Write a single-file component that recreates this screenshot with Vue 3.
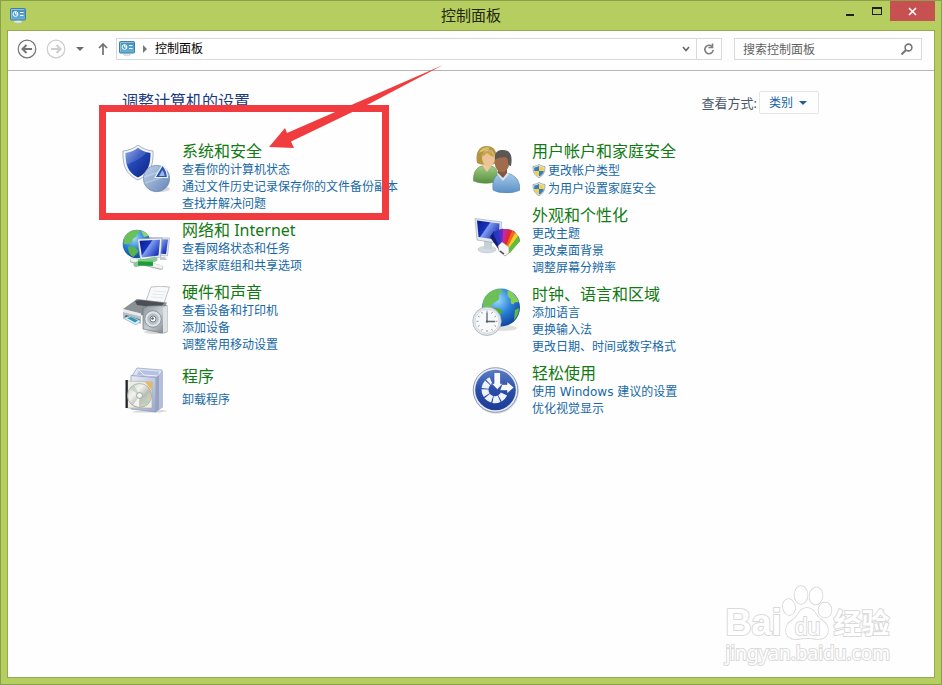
<script setup>
import { ref } from 'vue'

const search = ref('')
const viewMode = ref('category')

const columns = [
  [
    { icon: 'security', title: '系统和安全', links: ['查看你的计算机状态', '通过文件历史记录保存你的文件备份副本', '查找并解决问题'] },
    { icon: 'network', title: '网络和 Internet', links: ['查看网络状态和任务', '选择家庭组和共享选项'] },
    { icon: 'hardware', title: '硬件和声音', links: ['查看设备和打印机', '添加设备', '调整常用移动设置'] },
    { icon: 'programs', title: '程序', links: ['卸载程序'] }
  ],
  [
    { icon: 'users', title: '用户帐户和家庭安全', links: ['更改帐户类型', '为用户设置家庭安全'], shield: true },
    { icon: 'appearance', title: '外观和个性化', links: ['更改主题', '更改桌面背景', '调整屏幕分辨率'] },
    { icon: 'clock', title: '时钟、语言和区域', links: ['添加语言', '更换输入法', '更改日期、时间或数字格式'] },
    { icon: 'ease', title: '轻松使用', links: ['使用 Windows 建议的设置', '优化视觉显示'] }
  ]
]
</script>

<template>
  <div class="window">
    <svg class="sprite" width="0" height="0" aria-hidden="true">
      <defs>
        <linearGradient id="g-blue" x1="0" y1="0" x2="1" y2="1">
          <stop offset="0" stop-color="#7e9ee6" />
          <stop offset="0.4" stop-color="#2348b8" />
          <stop offset="1" stop-color="#0c2380" />
        </linearGradient>
        <linearGradient id="g-ease" x1="0" y1="0" x2="0" y2="1">
          <stop offset="0" stop-color="#5b7cc4" />
          <stop offset="0.5" stop-color="#2a4ea8" />
          <stop offset="1" stop-color="#1c3c98" />
        </linearGradient>
        <linearGradient id="g-screen" x1="0" y1="0" x2="1" y2="0.6">
          <stop offset="0" stop-color="#0a1a8c" />
          <stop offset="0.45" stop-color="#1633bb" />
          <stop offset="0.5" stop-color="#7f9df0" />
          <stop offset="1" stop-color="#1a35b8" />
        </linearGradient>
        <radialGradient id="g-globe" cx="0.4" cy="0.3" r="0.75">
          <stop offset="0" stop-color="#9fdcff" />
          <stop offset="0.5" stop-color="#2b83d8" />
          <stop offset="1" stop-color="#0b3f96" />
        </radialGradient>
        <linearGradient id="g-pie" x1="0" y1="0" x2="1" y2="1">
          <stop offset="0" stop-color="#c3d3ea" />
          <stop offset="1" stop-color="#6385b8" />
        </linearGradient>
        <linearGradient id="g-metal" x1="0" y1="0" x2="1" y2="1">
          <stop offset="0" stop-color="#8c949c" />
          <stop offset="0.5" stop-color="#c9ced3" />
          <stop offset="1" stop-color="#747c84" />
        </linearGradient>
        <linearGradient id="g-box" x1="0" y1="0" x2="1" y2="1">
          <stop offset="0" stop-color="#e9edf8" />
          <stop offset="1" stop-color="#9ba8cc" />
        </linearGradient>
        <linearGradient id="g-disc" x1="0" y1="0" x2="1" y2="1">
          <stop offset="0" stop-color="#c3ccbe" />
          <stop offset="0.35" stop-color="#f4f4ef" />
          <stop offset="0.6" stop-color="#b9bdb6" />
          <stop offset="1" stop-color="#f1e6c6" />
        </linearGradient>
        <linearGradient id="g-green" x1="0" y1="0" x2="0" y2="1">
          <stop offset="0" stop-color="#a3cc86" />
          <stop offset="1" stop-color="#568f3e" />
        </linearGradient>
        <linearGradient id="g-shirt" x1="0" y1="0" x2="0" y2="1">
          <stop offset="0" stop-color="#a9cbe9" />
          <stop offset="1" stop-color="#5a90c6" />
        </linearGradient>
        <linearGradient id="g-panel" x1="0" y1="0" x2="0" y2="1">
          <stop offset="0" stop-color="#3f8cba" />
          <stop offset="1" stop-color="#68b4d8" />
        </linearGradient>
      </defs>

      <symbol id="icon-panel" viewBox="0 0 16 16">
        <ellipse cx="8" cy="13.5" rx="4" ry="1.7" fill="#d6dce0" />
        <path d="M6.500 11h3.500v3H6.500z" fill="#e3e8eb" />
        <rect x="0.5" y="0.5" width="15" height="11.500" rx="1" fill="url(#g-panel)" stroke="#3f7fa6" />
        <path d="M1.500 10.500V1.500h13" fill="none" stroke="#8cc0dc" />
        <circle cx="5.500" cy="6" r="2.400" fill="none" stroke="#fff" />
        <path d="M5.500 6V3.600M5.500 6h2.400" stroke="#fff" />
        <path d="M10 4.500h3.500M10 7.500h3.500" stroke="#fff" stroke-width="1.200" />
      </symbol>

      <symbol id="icon-security" viewBox="0 0 48 48">
        <ellipse cx="38" cy="44" rx="10" ry="3" fill="#000" opacity="0.15" />
        <path d="M16 0C12 3.500 6.500 5.500 1 6c-.5 13 2 23 15 29 13-6 15.500-16 15-29C25.500 5.500 20 3.500 16 0z" fill="#f2f5fa" stroke="#8f9db2" stroke-width="0.8" />
        <path d="M16 2.800C12.500 5.500 8 7.500 3.500 8c0 11 2 19.500 12.500 24.500C26.500 27.500 28.500 19 28.500 8 24 7.500 19.500 5.500 16 2.800z" fill="url(#g-blue)" />
        <path d="M16 2.800C12.500 5.500 8 7.500 3.500 8c0 5 .3 8 1.500 11 5-1 12-4 22-13-4-.5-8-1.500-11-3.200z" fill="#fff" opacity="0.15" />
        <circle cx="34.500" cy="33.500" r="13.200" fill="url(#g-pie)" stroke="#6d88ae" stroke-width="0.7" />
        <path d="M22 32l24-8M23 38l24-8" stroke="#dce7f4" stroke-width="1.500" opacity="0.4" />
        <path d="M33 32.500L40.500 20q4.500 5 5 12.500z" fill="#2b52b0" stroke="#e9f1fb" stroke-width="1.200" />
        <path d="M37 31l3.500-6q2 3 2.200 6z" fill="#9cb7e4" />
      </symbol>

      <symbol id="icon-network" viewBox="0 0 48 48">
        <circle cx="15" cy="20" r="14.300" fill="url(#g-globe)" />
        <path d="M3 12c3-4 7-6.500 12-6 3 0 4 1.500 2 3-3 1-2 4-5 5-2 1-1 4-3 5-3 0-5 2-7 1-1-3 0-6 1-8z" fill="#6bc05c" />
        <path d="M6 23c4-2 9 1 10 4 0 3-3 3-4 6-4-1-6-5-6-10z" fill="#5ab24c" />
        <path d="M19 7c3 0 6 2 8 5l-5 1z" fill="#8fd070" />
        <path d="M28 13.500l19.500.5-2 18-16-1z" fill="#e1e5ec" stroke="#a3abb8" stroke-width="0.6" />
        <path d="M29 15l17 .5-2 14.500-15-.7z" fill="url(#g-screen)" />
        <path d="M15.500 15l24.500-1-1.500 19-20 3z" fill="#edf0f5" stroke="#8d96a5" stroke-width="0.6" />
        <path d="M17.500 16.800l20.500-1-1.500 15.700-16.500 2z" fill="url(#g-screen)" />
        <path d="M26 35h6l2 3-9-.5z" fill="#c5cad1" />
        <path d="M38 33h5l2 3h-7z" fill="#c5cad1" />
        <path d="M10 36.500l29 7" stroke="#a4aaac" stroke-width="4.500" stroke-linecap="round" />
        <path d="M10 36l29 7" stroke="#eef2f1" stroke-width="3.500" stroke-linecap="round" />
        <path d="M14 40.500L33 35" stroke="#8fc79c" stroke-width="5" stroke-linecap="round" />
        <path d="M16 38.500l15 .5" stroke="#1f9a3d" stroke-width="6" />
        <path d="M16 36.500l15 .5" stroke="#79dd75" stroke-width="1.500" />
      </symbol>

      <symbol id="icon-hardware" viewBox="0 0 48 48">
        <path d="M29 1q9-1.500 18.500 0L42 17l-18-2z" fill="#f8f9fb" stroke="#a7abb0" stroke-width="0.7" />
        <path d="M31 5l13 .8M30 8l12.500 .8M29 11l12 .8" stroke="#e0e3e6" stroke-width="0.8" />
        <path d="M1 23l14-10 30 3.500-5 10-22 3z" fill="#8b9095" />
        <path d="M13 15l5-1 24 3-4 5-23-3z" fill="#4a4f54" />
        <path d="M1 23l18 4.500V38L1 31z" fill="#babfc3" />
        <path d="M1 23l18 4.500v3L1 26z" fill="#e9ebed" />
        <path d="M4 29l14 4.500-1 3-15-5z" fill="#3d6576" />
        <path d="M1 32l7-2 11 5-5 4z" fill="#ddeef6" stroke="#78a3b5" stroke-width="0.6" />
        <path d="M5 32l4-1 7 3.500-3 2z" fill="#2c97bd" />
        <ellipse cx="34" cy="46" rx="12" ry="2" fill="#000" opacity="0.15" />
        <path d="M21 22l5-2 19-.5v26L40 47l-19-4z" fill="url(#g-metal)" stroke="#6b7278" stroke-width="0.7" />
        <path d="M41 22l4-2.500v26L41 47z" fill="#dfe2e4" />
        <circle cx="31" cy="33" r="8.300" fill="#dfe4e7" stroke="#8b9298" />
        <circle cx="31" cy="33" r="5.800" fill="#b9c0c5" />
        <circle cx="31" cy="33" r="3" fill="#f5f7f8" stroke="#7d858b" />
        <circle cx="30.500" cy="32.500" r="1.200" fill="#59636b" />
      </symbol>

      <symbol id="icon-programs" viewBox="0 0 48 48">
        <path d="M13 46l28-1 5 1-8 1.500H10z" fill="#000" opacity="0.15" />
        <path d="M10 11l5-8 25 2-1 9z" fill="#dfe4f3" stroke="#8e9bbd" stroke-width="0.7" />
        <path d="M17 5l20 1.500-1.500 6L15 10z" fill="#b4c0e4" />
        <path d="M17 5l5 5 14 1" fill="none" stroke="#eef2fb" />
        <path d="M9 10.500l25 2V47l-25-3z" fill="url(#g-box)" stroke="#8794b7" stroke-width="0.7" />
        <path d="M34 12.500L41 6v36l-7 5z" fill="#97a2c0" />
        <path d="M37 10l4-4v36l-4 2.500z" fill="#b5bfd8" />
        <path d="M5.500 16L30 17v26L5.500 43z" fill="#eeeee8" stroke="#aaa99f" stroke-width="0.6" />
        <path d="M23 17h7v9z" fill="#e6ba62" />
        <path d="M3.500 15h2.300v28H3.500z" fill="#22252a" />
        <circle cx="17.500" cy="30.500" r="12" fill="url(#g-disc)" stroke="#9ca099" stroke-width="0.7" />
        <path d="M17.500 30.500L8 23.500l4-4zM17.500 30.500l10 6-4 5z" fill="#b4cfba" opacity="0.7" />
        <path d="M17.500 30.500L17 42l-6-2z" fill="#fff" opacity="0.8" />
        <circle cx="17.500" cy="30.500" r="3" fill="#eef1f0" stroke="#8f9694" stroke-width="0.8" />
        <circle cx="17.500" cy="30.500" r="1.100" fill="#fff" />
      </symbol>

      <symbol id="icon-users" viewBox="0 0 48 48">
        <path d="M1.500 36C1 27 5 22 10 21h9c5 1 8 6 7 15-8 3-17 3-24.500 0z" fill="url(#g-green)" stroke="#5e8b48" stroke-width="0.6" />
        <path d="M10 20l5 7 5-7z" fill="#f1c89f" />
        <path d="M5 18C3 8 7 1 14.500 1 22 1 26 6 24.500 18c-3 2-6 2-9 1-4 1-7 1-10.500-1z" fill="#b3953f" />
        <path d="M7 8c2-5 7-7 11-5-4 2-9 4-11 5z" fill="#d8c375" />
        <ellipse cx="16.500" cy="13" rx="6.500" ry="8.500" fill="#edc297" />
        <path d="M9 12c1-5 5-6 9-7 3 2 4 5 4 7-3-1-5-2-7-4-2 2-4 3-6 4z" fill="#c4a64e" />
        <path d="M21 45c-1-10 2-15 8-17h6c8 2 13 7 13 17-8 4-20 4-27 0z" fill="url(#g-shirt)" stroke="#5082b3" stroke-width="0.6" />
        <path d="M25 29l6 7 6-7-4-4h-5z" fill="#d5e6f5" />
        <path d="M26 22h9v6l-4 5-5-5z" fill="#84573a" />
        <ellipse cx="30" cy="18" rx="7.200" ry="9.300" fill="#a06d4c" />
        <path d="M23 15C22 7 26 5 31 5c7 0 10 5 8 16-2 0-3-2-3-4 0-3-1-4-3-5-4 1-7 0-10 3z" fill="#5b5754" />
      </symbol>

      <symbol id="icon-appearance" viewBox="0 0 48 48">
        <ellipse cx="15" cy="40.500" rx="9" ry="3.300" fill="#d3dbe2" stroke="#b3bcc4" stroke-width="0.6" />
        <path d="M12 32h8v8h-8z" fill="#c6d0d8" />
        <path d="M3 9.500l26.500 3.500-1 21.500L5 31z" fill="#e5e9ee" stroke="#a2abb4" stroke-width="0.7" />
        <path d="M5 11.500l22.500 3-1 16.500-20-3z" fill="url(#g-screen)" />
        <path d="M18 28l4-5 5-2 5-1 5 .5 5 1.500 5 6 1 4-12 13-8-5z" fill="#7a2a6c" />
        <path d="M27 41L18 28l4-6 8 18z" fill="#141c78" />
        <path d="M28 40l-7-16 5-3L32 40z" fill="#2338c4" />
        <path d="M29 39l-3-18 5-1.500L33 40z" fill="#5a2cc0" />
        <path d="M30 39l1-19 5 0L34 40z" fill="#c02aa8" />
        <path d="M31 39l5-19 4 1.500-5 18z" fill="#e5262f" />
        <path d="M33 40l7-18.500 4 2.500-8 17z" fill="#f0671f" />
        <path d="M34 41l9-17 3.500 3-10 15z" fill="#f4cf26" />
        <path d="M34 43l12-16 2 5-10 12z" fill="#62bd3a" />
        <path d="M26 37l4-4 7 5v6l-4 3-6-5z" fill="#f6f6f6" stroke="#9a9a9c" stroke-width="0.7" />
        <path d="M28 42l4 3" stroke="#444a52" stroke-width="1.500" />
      </symbol>

      <symbol id="icon-clock" viewBox="0 0 48 48">
        <ellipse cx="31" cy="40" rx="14" ry="3" fill="#000" opacity="0.12" />
        <circle cx="29" cy="19.500" r="19" fill="url(#g-globe)" />
        <path d="M12 11c3-6 9-10 16-10 4 1 2 4-1 5-1 3 2 5-2 7-2 2-4 1-5 4-1 4-5 5-8 4-2-2-1-7 0-10z" fill="#6dc055" />
        <path d="M36 2c5 2 9 7 11 12-3 1-4-1-5 2-3 1-4-2-3-5-3-1-4.500-5-3-9z" fill="#86cc58" />
        <path d="M20 20c5-1 8 0 10 3 0 4-4 5-6 9-4-2-6-7-4-12z" fill="#4bae3e" />
        <path d="M43 22l4-2c0 5-2 9-5 12z" fill="#60b84a" />
        <circle cx="15" cy="33.300" r="14.200" fill="#e3e8ec" stroke="#a5afb7" stroke-width="0.8" />
        <circle cx="15" cy="33.300" r="12" fill="#f8f9fa" stroke="#ccd2d6" stroke-width="0.7" />
        <path d="M15 22.500v2M15 42v2M4.500 33.300h2M23.500 33.300h2M9.500 24l1 1.500M20.500 24l-1 1.500M9.500 42.500l1-1.500M20.500 42.500l-1-1.500M6 28l1.500 1M6 38.500l1.500-1M24 28l-1.500 1M24 38.500l-1.500-1" stroke="#8b97a0" />
        <path d="M15 24.500v9h8" fill="none" stroke="#5b666e" stroke-width="1.300" />
        <circle cx="15" cy="33.500" r="1.200" fill="#5b666e" />
      </symbol>

      <symbol id="icon-ease" viewBox="0 0 48 48">
        <circle cx="24" cy="24" r="22.800" fill="#000" opacity="0.15" />
        <circle cx="23.500" cy="23" r="22.300" fill="#e8eef8" stroke="#7584a8" stroke-width="0.8" />
        <circle cx="23.500" cy="23" r="20.300" fill="url(#g-ease)" />
        <path d="M32 27A10 10 0 1 1 19 13.500" fill="none" stroke="#edf3fd" stroke-width="7" stroke-dasharray="6 1" />
        <path d="M22 5.500h6.500v11h2.500l-5.700 6-5.800-6H22z" fill="#f7faff" stroke="#2a4ea8" stroke-width="0.6" />
        <path d="M30 17.500h5v-3l7 6-7 6v-3h-7z" fill="#f7faff" stroke="#2a4ea8" stroke-width="0.6" />
      </symbol>

      <symbol id="icon-shield" viewBox="0 0 16 16">
        <path d="M8 .5C6 2 3.500 2.700 1.200 2.800 1 9 3 13 8 15.600 13 13 15 9 14.800 2.800 12.500 2.700 10 2 8 .5z" fill="#eceff2" stroke="#7b8894" stroke-width="0.8" />
        <path d="M8 2C6.300 3.200 4.400 3.700 2.500 3.900V8H8z" fill="#317fc0" />
        <path d="M8 2c1.700 1.200 3.600 1.700 5.500 1.900V8H8z" fill="#f5ce4a" />
        <path d="M2.500 8c.4 2.700 2 4.700 5.500 6.300V8z" fill="#f5ce4a" />
        <path d="M13.500 8c-.4 2.700-2 4.700-5.500 6.300V8z" fill="#317fc0" />
      </symbol>
    </svg>

    <header class="titlebar">
      <svg class="title-icon" width="16" height="16" aria-hidden="true"><use href="#icon-panel" /></svg>
      <h1 class="title">控制面板</h1>
      <div class="controls">
        <button class="control" aria-label="最小化">
          <svg width="10" height="10"><path d="M1 8h8v2H1z" fill="#1d1f12" /></svg>
        </button>
        <button class="control" aria-label="最大化">
          <svg width="10" height="10"><path d="M0 1h10v8H0zM1 3v5h8V3z" fill="#1d1f12" fill-rule="evenodd" /></svg>
        </button>
        <button class="control control-close" aria-label="关闭">
          <svg width="9" height="9"><path d="M1 1l7 7M8 1L1 8" stroke="#fff" stroke-width="1.600" /></svg>
        </button>
      </div>
    </header>

    <div class="client">
      <nav class="toolbar">
        <button class="nav-button" aria-label="后退">
          <svg width="20" height="20" fill="none" stroke="#757575">
            <circle cx="10" cy="10" r="8.800" stroke-width="1.200" />
            <path d="M15 10H6M9.500 6L5.500 10l4 4" stroke-width="2" />
          </svg>
        </button>
        <button class="nav-button nav-forward" aria-label="前进">
          <svg width="20" height="20" fill="none" stroke="#cdcdcd">
            <circle cx="10" cy="10" r="8.800" stroke-width="1.200" />
            <path d="M5 10h9M10.500 6l4 4-4 4" stroke-width="2" />
          </svg>
        </button>
        <button class="nav-button nav-history" aria-label="最近浏览的位置">
          <svg width="8" height="4"><path d="M0 0h8L4 4z" fill="#6c6c6c" /></svg>
        </button>
        <button class="nav-button nav-up" aria-label="上移">
          <svg width="12" height="14" fill="none" stroke="#707070" stroke-width="1.700"><path d="M6 13V2M2 6l4-4 4 4" /></svg>
        </button>
        <div class="address">
          <svg width="16" height="16" aria-hidden="true"><use href="#icon-panel" /></svg>
          <svg class="crumb-arrow" width="4" height="8" aria-hidden="true"><path d="M0 0l4 4-4 4z" fill="#777" /></svg>
          <a class="crumb" href="#">控制面板</a>
          <button class="address-button" aria-label="以前的位置">
            <svg width="8" height="8" fill="none" stroke="#666" stroke-width="1.600"><path d="M1 2l3 3.500L7 2" /></svg>
          </button>
          <button class="address-button address-refresh" aria-label="刷新">
            <svg width="12" height="12" fill="none" stroke="#7d7d7d" stroke-width="1.600">
              <path d="M9 3.500A4.200 4.200 0 1 0 10.200 7" />
              <path d="M9.500 .5v4h-4" />
            </svg>
          </button>
        </div>
        <label class="search">
          <input v-model="search" type="text" placeholder="搜索控制面板" aria-label="搜索控制面板" />
          <svg width="12" height="12" fill="none" stroke="#777" aria-hidden="true">
            <circle cx="7.500" cy="4.500" r="3.400" stroke-width="1.600" />
            <path d="M5 7l-4.500 4.500" stroke-width="2" />
          </svg>
        </label>
      </nav>

      <main class="content">
        <div class="content-head">
          <h2 class="heading">调整计算机的设置</h2>
          <div class="view">
            <label for="view-mode">查看方式:</label>
            <span class="view-box">
              <select id="view-mode" v-model="viewMode">
                <option value="category">类别</option>
                <option value="large">大图标</option>
                <option value="small">小图标</option>
              </select>
              <svg width="8" height="4" aria-hidden="true"><path d="M0 0h8L4 4z" fill="#1d5f96" /></svg>
            </span>
          </div>
        </div>

        <div class="columns">
          <div v-for="(column, i) in columns" :key="i" class="column">
            <section v-for="item in column" :key="item.icon" class="category">
              <svg class="category-icon" width="48" height="48" aria-hidden="true"><use :href="`#icon-${item.icon}`" /></svg>
              <div class="category-text">
                <h3 class="category-title"><a href="#">{{ item.title }}</a></h3>
                <ul class="links">
                  <li v-for="link in item.links" :key="link" :class="{ shielded: item.shield }">
                    <svg v-if="item.shield" width="14" height="16" aria-hidden="true"><use href="#icon-shield" /></svg>
                    <a href="#">{{ link }}</a>
                  </li>
                </ul>
              </div>
            </section>
          </div>
        </div>
      </main>

      <div class="marker" />
      <svg class="arrow" width="176" height="86" viewBox="0 0 176 86" aria-hidden="true">
        <path d="M1 82L17 63l2 5L175 0 99 40 23 76.500l3 6.500z" fill="#f03c3e" />
      </svg>

      <div class="watermark" aria-hidden="true">
        <div class="watermark-logo">
          <span class="watermark-bai">Bai</span>
          <span class="watermark-paw">
            <svg width="52" height="56" viewBox="0 0 52 56" fill="#fff" stroke="#d2d2d2" stroke-width="1.500">
              <ellipse cx="8" cy="22" rx="6" ry="8" transform="rotate(-12 8 22)" />
              <ellipse cx="20" cy="10" rx="6.500" ry="9" />
              <ellipse cx="35" cy="11" rx="6.500" ry="8.500" transform="rotate(8 35 11)" />
              <ellipse cx="44" cy="25" rx="6.500" ry="7.500" />
              <path d="M26 23c-7 0-8 6-12 10-5 4-9 6-9 12 0 7 5 9 10 9 4 0 7-1 11-1s7 1 11 1c6 0 10-3 10-9s-4-8-9-12c-4-4-5-10-12-10z" />
            </svg>
            <span class="watermark-du">du</span>
          </span>
          <span class="watermark-cn">经验</span>
        </div>
        <div class="watermark-url">jingyan.baidu.com</div>
      </div>
    </div>
  </div>
</template>

<style>
body {
  margin: 0;
}
</style>

<style scoped>
.window {
  box-sizing: border-box;
  display: flex;
  flex-direction: column;
  min-height: 100vh;
  padding: 0 7px 7px;
  border: 1px solid #8ba04a;
  background: #b6cd60;
  font-family: "Noto Sans", "Noto Sans CJK SC", sans-serif;
  font-size: 12px;
  color: #000;
}
.sprite {
  position: absolute;
}
button {
  display: flex;
  align-items: center;
  justify-content: center;
  padding: 0;
  border: none;
  background: none;
  cursor: pointer;
}
a {
  color: inherit;
  text-decoration: none;
}
a:hover {
  text-decoration: underline;
}
h1,
h2,
h3,
ul {
  margin: 0;
  padding: 0;
  font-weight: 400;
  list-style: none;
}

.titlebar {
  display: grid;
  grid-template-columns: 1fr auto 1fr;
  height: 29px;
}
.title-icon {
  margin: 7px 2px;
}
.title {
  font-size: 15px;
  line-height: 29px;
  color: #22260f;
}
.controls {
  display: flex;
  justify-content: flex-end;
  align-items: flex-start;
  margin-right: -1px;
}
.control {
  width: 27px;
  height: 20px;
}
.control-close {
  width: 45px;
  background: #c75050;
}

.client {
  position: relative;
  flex: 1;
  display: flex;
  flex-direction: column;
  border: 1px solid #94a850;
  margin: 0 -1px -1px;
  background: #fefefe;
}
.toolbar {
  display: flex;
  align-items: center;
  height: 36px;
  padding: 0 12px 3px 9px;
  border-bottom: 1px solid #b5b5b5;
}
.nav-button {
  flex: none;
  height: 22px;
}
.nav-forward {
  margin-left: 9px;
}
.nav-history {
  margin-left: 10px;
}
.nav-up {
  margin: 0 7px 0 13px;
}
.address,
.search {
  box-sizing: border-box;
  display: flex;
  align-items: center;
  height: 22px;
  border: 1px solid #d9d9d9;
  background: #fff;
}
.address {
  flex: 1;
  padding-left: 2px;
}
.crumb-arrow {
  margin: 0 8px;
}
.crumb {
  flex: 1;
  line-height: 20px;
}
.address-button {
  width: 20px;
  height: 20px;
}
.address-refresh {
  width: 25px;
  border-left: 1px solid #d9d9d9;
}
.search {
  width: 188px;
  margin-left: 12px;
  padding: 0 8px;
}
.search input {
  flex: 1;
  min-width: 0;
  padding: 0;
  border: none;
  outline: none;
  background: none;
  font: inherit;
}
.search input::placeholder {
  color: #5f5f5f;
}

.content {
  padding: 20px 111px 24px 114px;
}
.content-head {
  display: flex;
  align-items: center;
  justify-content: space-between;
  max-width: 697px;
  height: 23px;
}
.heading {
  align-self: flex-start;
  font-size: 16px;
  line-height: 20px;
  color: #1a3a80;
}
.view {
  display: flex;
  align-items: center;
  gap: 2px;
  font-size: 13px;
  line-height: 20px;
  color: #4a5868;
}
.view-box {
  box-sizing: border-box;
  display: flex;
  align-items: center;
  gap: 6px;
  height: 23px;
  padding: 0 11px 0 9px;
  border: 1px solid #e3e6e9;
  border-radius: 2px;
}
.view-box select {
  appearance: none;
  width: 24px;
  padding: 0;
  border: none;
  background: none;
  font: inherit;
  font-size: 12px;
  color: #1465a8;
}

.columns {
  display: grid;
  grid-template-columns: 1fr 1fr;
  max-width: 700px;
  margin-top: 27px;
}
.column {
  display: flex;
  flex-direction: column;
  gap: 7px;
}
.category {
  display: flex;
  gap: 12px;
}
.category-icon {
  flex: none;
  margin: 4px 0 -4px;
}
.category-text {
  display: flex;
  flex-direction: column;
  justify-content: space-evenly;
  min-height: 53px;
  white-space: nowrap;
}
.category-title {
  font-size: 16px;
  line-height: 21px;
  color: #127a12;
}
.links {
  font-family: "DejaVu Sans", "Noto Sans CJK SC", sans-serif;
  line-height: 17px;
  color: #1768a6;
}
.links .shielded {
  display: flex;
  align-items: center;
  gap: 2px;
  line-height: 18px;
}

/* highlight box and pointer drawn over the first category */
.marker {
  position: absolute;
  left: 91px;
  top: 74px;
  box-sizing: border-box;
  width: 290px;
  height: 115px;
  border: 7px solid #f03c3e;
}
.arrow {
  position: absolute;
  left: 260px;
  top: 34px;
}

.watermark {
  position: absolute;
  right: 44px;
  bottom: 12px;
  color: #fff;
  -webkit-text-stroke: 2px #dadada;
  paint-order: stroke fill;
}
.watermark-logo {
  display: flex;
  align-items: flex-end;
  font-weight: 700;
}
.watermark-bai {
  font-family: "Liberation Sans", sans-serif;
  font-size: 36px;
  line-height: 36px;
}
.watermark-paw {
  position: relative;
  display: flex;
}
.watermark-du {
  position: absolute;
  left: 0;
  right: 0;
  bottom: 2px;
  font-family: "Liberation Sans", sans-serif;
  font-size: 23px;
  font-weight: 400;
  line-height: 24px;
  text-align: center;
}
.watermark-cn {
  font-size: 28px;
  line-height: 36px;
}
.watermark-url {
  font-family: "Noto Sans", sans-serif;
  font-size: 19px;
  line-height: 24px;
}
</style>
